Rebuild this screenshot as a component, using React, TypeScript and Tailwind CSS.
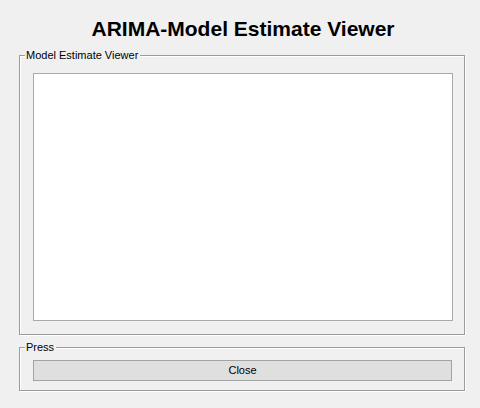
import React from 'react';

const GroupBox: React.FC<{ label: string; className?: string; children: React.ReactNode }> = ({ label, className, children }) => (
    <div className={`relative border border-[#9b9b9b] shadow-[1px_1px_0_#ffffff,inset_1px_1px_0_#ffffff] ${className ?? ''}`}>
        <span className="absolute left-[5px] top-[-8px] bg-[#f0f0f0] pr-[2px] pl-[1px] text-[11px] leading-[14px] text-black">
            {label}
        </span>
        {children}
    </div>
);

const App: React.FC = () => {
    return (
        <div className="w-[480px] h-[408px] bg-[#f0f0f0] font-['Liberation_Sans',Arial,sans-serif] flex flex-col">
            <div className="h-[55px] flex justify-center pt-[18px] pl-[6px]">
                <h1 className="text-[21px] font-bold text-black leading-none">ARIMA-Model Estimate Viewer</h1>
            </div>
            <GroupBox label="Model Estimate Viewer" className="ml-[19px] w-[446px] h-[280px] pt-[17px] pl-[13px] pr-[11px] pb-[13px]">
                <div className="h-full bg-white border border-[#a9a9a9]" />
            </GroupBox>
            <GroupBox label="Press" className="ml-[19px] mt-[12px] w-[446px] h-[44px] pt-[12px] pl-[13px] pr-[12px]">
                <button className="block w-full h-[21px] bg-[#dfdfdf] border border-[#a3a3a3] text-[11px] text-black leading-none">
                    Close
                </button>
            </GroupBox>
        </div>
    );
};

export default App;
